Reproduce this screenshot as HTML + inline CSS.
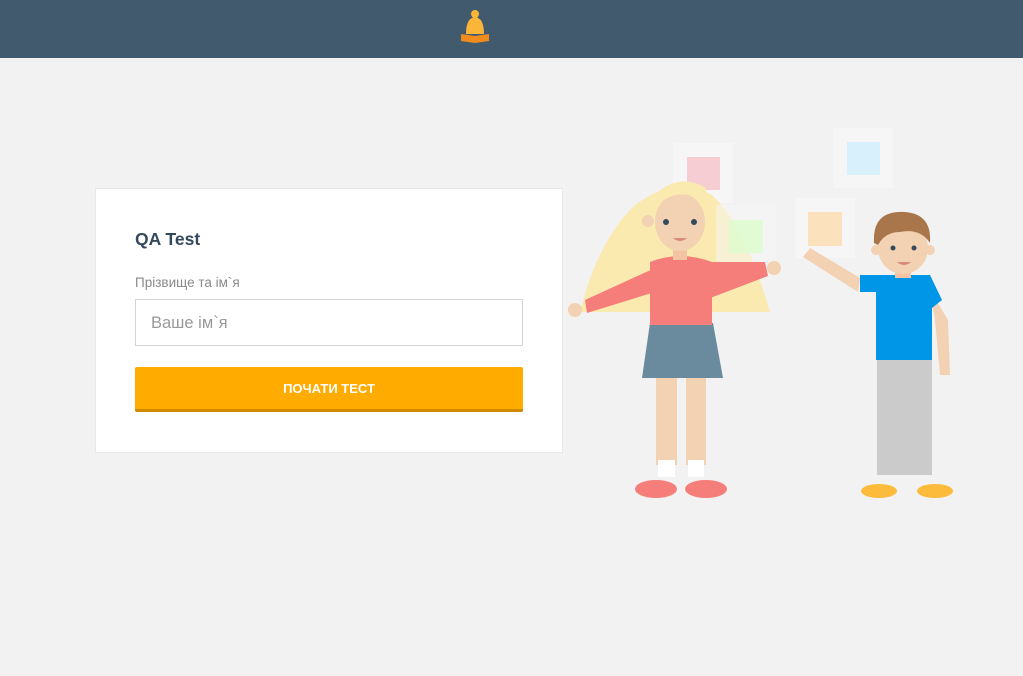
<!DOCTYPE html>
<html><head><meta charset="utf-8"><style>
*{margin:0;padding:0;box-sizing:border-box}
body{width:1023px;height:676px;background:#f2f2f2;font-family:"Liberation Sans",sans-serif;position:relative;overflow:hidden}
.hdr{position:absolute;left:0;top:0;width:1023px;height:58px;background:#425a6e}
.card{position:absolute;left:95px;top:188px;width:468px;height:265px;background:#fff;border:1px solid #e8e8e8}
.t{position:absolute;left:39px;top:40px;font-size:17.5px;font-weight:bold;color:#34495e}
.l{position:absolute;left:39px;top:86px;font-size:13.5px;color:#8a8a8a}
.in{position:absolute;left:39px;top:110px;width:388px;height:47px;border:1px solid #d4d4d4;font-size:16.5px;color:#9a9a9a;padding:14px 0 0 15px}
.btn{position:absolute;left:39px;top:178px;width:388px;height:45px;background:#ffab00;border-bottom:3px solid #d08a00;border-radius:2px;color:#fff;font-weight:bold;font-size:13px;text-align:center;line-height:43px}
svg{position:absolute;left:0;top:0}
</style></head><body>
<div class="hdr"></div>
<div class="card"><div class="t">QA Test</div><div class="l">Прізвище та ім`я</div><div class="in">Ваше ім`я</div><div class="btn">ПОЧАТИ ТЕСТ</div></div>
<svg width="1023" height="676">
<!-- bell -->
<circle cx="475" cy="14" r="4" fill="#fbb63a"/>
<path d="M466 34 Q466 18 475 17 Q484 18 484 34 Z" fill="#fbb63a"/>
<path d="M461 34 L475 36 L489 34 L489 41 L475 43 L461 41Z" fill="#f08c1e"/>
<!-- squares -->
<rect x="673" y="143" width="60" height="60" fill="#f6f6f6"/><rect x="687" y="157" width="33" height="33" fill="#f5cdd2"/>
<rect x="833" y="128" width="60" height="60" fill="#f6f6f6"/><rect x="847" y="142" width="33" height="33" fill="#d8f0fc"/>
<rect x="795" y="198" width="60" height="60" fill="#f6f6f6"/><rect x="808" y="212" width="34" height="34" fill="#fbe2bd"/>
<!-- girl hair -->
<path d="M580 312 Q598 240 635 205 Q675 175 712 195 Q745 225 770 312Z" fill="#fbeab0"/>
<rect x="716" y="205" width="60" height="57" fill="#f6f6f6" opacity=".5"/><rect x="729" y="220" width="34" height="33" fill="#dcfccd" opacity=".8"/>
<!-- legs -->
<rect x="656" y="375" width="21" height="90" fill="#f3d1b3"/><rect x="686" y="375" width="20" height="90" fill="#f3d1b3"/>
<rect x="658" y="460" width="17" height="17" fill="#fff"/><rect x="688" y="460" width="16" height="17" fill="#fff"/>
<ellipse cx="656" cy="489" rx="21" ry="9" fill="#f57e7a"/><ellipse cx="706" cy="489" rx="21" ry="9" fill="#f57e7a"/>
<path d="M650 323 L713 323 L723 378 L642 378Z" fill="#6a8b9e"/>
<!-- arms -->
<path d="M655 268 L585 300 L587 313 L655 292Z" fill="#f57e7a"/>
<circle cx="575" cy="310" r="7" fill="#f3d1b3"/>
<path d="M705 262 L765 262 L768 276 L705 300Z" fill="#f57e7a"/>
<circle cx="774" cy="268" r="7" fill="#f3d1b3"/>
<path d="M650 262 Q680 250 712 262 L712 325 L650 325Z" fill="#f57e7a"/>
<rect x="673" y="240" width="14" height="20" fill="#f3c4a3"/>
<ellipse cx="680" cy="222" rx="25" ry="29" fill="#f3d1b3"/>
<circle cx="648" cy="221" r="6" fill="#f3d1b3"/>
<path d="M654 210 Q672 185 706 200 L706 188 Q680 172 654 195Z" fill="#fbeab0"/>
<circle cx="666" cy="222" r="3" fill="#34495e"/><circle cx="694" cy="222" r="3" fill="#34495e"/>
<path d="M673 238 Q680 244 687 238Z" fill="#d88a7e"/>
<!-- boy -->
<path d="M860 278 L810 248 L803 257 L858 292Z" fill="#f3d1b3"/>
<rect x="877" y="355" width="25" height="120" fill="#cbcbcb"/><rect x="902" y="355" width="30" height="120" fill="#cbcbcb"/>
<ellipse cx="879" cy="491" rx="18" ry="7" fill="#fdbb3c"/><ellipse cx="935" cy="491" rx="18" ry="7" fill="#fdbb3c"/>
<path d="M930 290 L948 320 L950 375 L940 375 L935 320Z" fill="#f3d1b3"/>
<path d="M860 275 L930 275 L942 300 L932 308 L932 360 L876 360 L876 292 L860 292Z" fill="#0096e8"/>
<rect x="895" y="262" width="16" height="16" fill="#f3c4a3"/>
<ellipse cx="903" cy="248" rx="25" ry="26" fill="#f3d1b3"/>
<circle cx="876" cy="250" r="5" fill="#f3d1b3"/><circle cx="930" cy="250" r="5" fill="#f3d1b3"/>
<path d="M874 243 Q872 210 905 212 Q932 214 930 243 Q920 228 900 232 Q885 232 878 245Z" fill="#a8764a"/>
<circle cx="893" cy="248" r="2.5" fill="#34495e"/><circle cx="914" cy="248" r="2.5" fill="#34495e"/>
<path d="M897 262 Q904 268 911 262Z" fill="#d88a7e"/>
</svg>
</body></html>
